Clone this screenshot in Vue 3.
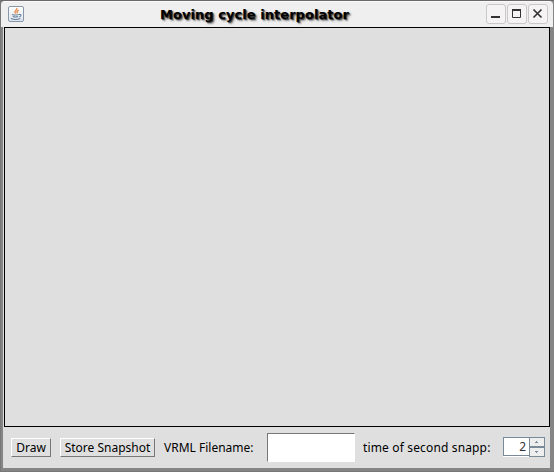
<script setup>
import { ref } from 'vue'

const title = 'Moving cycle interpolator'
const filename = ref('')
const seconds = ref(2)
</script>

<template>
  <div class="window">
    <header class="titlebar">
      <svg class="java" width="16" height="16" viewBox="0 0 16 16">
        <defs>
          <linearGradient id="face" x1="0" y1="0" x2="0" y2="1">
            <stop offset="0" stop-color="#fff" />
            <stop offset="1" stop-color="#dce3ea" />
          </linearGradient>
        </defs>
        <rect x=".5" y=".5" width="15" height="15" rx="1.5" fill="url(#face)" stroke="#8798ab" />
        <path d="M8.800 2c.8 2.200-3.300 2.800-1.400 5.600M10.800 4.200c-2.400 1-1.900 1.800-1.500 3.200" fill="none" stroke="#e8914f" stroke-width="1.400" />
        <path d="M4 8.500c2 .7 4.600.6 6.600 0M4.800 10.500c1.700.6 3.700.6 5.200 0M3 12.500c2.500 1.200 6.800 1.100 9.300.1M11 8.500c2.700-.5 2.300 1.700.2 2.400" fill="none" stroke="#65819d" stroke-width="1.100" />
      </svg>
      <h1>{{ title }}</h1>
      <div class="controls">
        <button aria-label="Minimize">
          <svg width="18" height="18" viewBox="0 0 18 18"><path d="M4 12h9" /></svg>
        </button>
        <button aria-label="Maximize">
          <svg width="18" height="18" viewBox="0 0 18 18"><path d="M4 5h9" /><path class="thin" d="M4.500 5v7.500h8V5" /></svg>
        </button>
        <button aria-label="Close">
          <svg width="18" height="18" viewBox="0 0 18 18"><path class="cross" d="M4.500 4.500l8 8M12.500 4.500l-8 8" /></svg>
        </button>
      </div>
    </header>
    <div class="body">
      <main class="canvas"></main>
      <footer class="toolbar">
        <button class="push draw">Draw</button>
        <button class="push store">Store Snapshot</button>
        <label class="file-label" for="file">VRML Filename:</label>
        <input id="file" v-model="filename" class="file" />
        <label class="time-label">time of second snapp:</label>
        <div class="spinner">
          <span class="value">{{ seconds }}</span>
          <div class="steps">
            <button aria-label="Increase" @click="seconds++">
              <svg width="4" height="2" viewBox="0 0 4 2"><path d="M1 0h1v1h1v1H0V1h1z" /></svg>
            </button>
            <button aria-label="Decrease" @click="seconds--">
              <svg width="4" height="2" viewBox="0 0 4 2"><path d="M0 0h3v1H2v1H1V1H0z" /></svg>
            </button>
          </div>
        </div>
      </footer>
    </div>
  </div>
</template>

<style>
body {
  background: #858585;
}
</style>

<style scoped>
* {
  box-sizing: border-box;
}
button {
  margin: 0;
  padding: 0;
  font: inherit;
}
.window {
  width: 554px;
  height: 472px;
  display: flex;
  flex-direction: column;
  background: #858585;
  border-top: 1px solid #6e6a6c;
  border-left: 1px solid #777;
  border-bottom: 1px solid #777;
  font-family: "Noto Sans", "Open Sans", sans-serif;
  font-size: 12px;
  color: #000;
}
.titlebar {
  height: 26px;
  display: flex;
  align-items: flex-start;
  background: #efefef;
  border-top: 1px solid #fafafa;
  border-radius: 4px 4px 0 0;
  margin-right: 1px;
  padding: 0 5px 0 7px;
}
.java {
  display: block;
  margin-top: 4px;
}
h1 {
  flex: 1;
  margin: 5px 0 0;
  padding-left: 136px;
  font: bold 13px/16px "DejaVu Sans", sans-serif;
  letter-spacing: 0.05px;
  white-space: nowrap;
  text-shadow: 1px 1px 1px #333, 2px 2px 2px #888;
}
.controls {
  display: flex;
  gap: 1px;
  margin-top: 2px;
}
.controls button {
  width: 20px;
  height: 20px;
  display: grid;
  place-items: center;
  background: #f6f3f5;
  border: 1px solid #cbc8ca;
  border-radius: 3px;
}
.controls path {
  fill: none;
  stroke: #333;
  stroke-width: 2;
}
.controls .thin {
  stroke-width: 1;
}
.controls .cross {
  stroke-width: 1.7;
}
.body {
  margin: 0 4px 0 2px;
  height: 441px;
  border-left: 1px solid #ddd;
  display: flex;
  flex-direction: column;
  background: #dfdfdf;
}
.canvas {
  height: 400px;
  border: 1px solid #000;
}
.toolbar {
  flex: 1;
  display: flex;
  align-items: center;
  padding-left: 7px;
  white-space: nowrap;
}
.push {
  height: 19px;
  background: #dfdfdf;
  border: 1px solid;
  border-color: #fff #777 #777 #fff;
  line-height: 17px;
  color: #000;
}
.draw {
  width: 40px;
}
.store {
  width: 95px;
  margin-left: 9px;
}
.file-label {
  width: 112px;
  padding-left: 9px;
}
.file {
  width: 88px;
  height: 29px;
  margin-bottom: 1px;
  padding: 2px;
  border: 1px solid;
  border-color: #777 #fff #fff #777;
  background: #fff;
  outline: 0;
}
.time-label {
  width: 148px;
  padding-left: 8px;
  letter-spacing: 0.15px;
}
.spinner {
  display: flex;
  width: 42px;
  height: 20px;
  margin-bottom: 2px;
}
.value {
  flex: 1;
  height: 19px;
  background: #fff;
  border: 1px solid #7a8a99;
  border-right: 0;
  box-shadow: 0 1px #fff;
  text-align: right;
  line-height: 18px;
  padding-right: 3px;
  color: #333;
}
.steps {
  width: 16px;
  display: grid;
  grid-template-rows: 10px 10px;
}
.steps button {
  display: grid;
  place-items: center;
  background: #eee;
  border: 1px solid #7a8a99;
}
.steps path {
  fill: #7a8a99;
}
</style>
